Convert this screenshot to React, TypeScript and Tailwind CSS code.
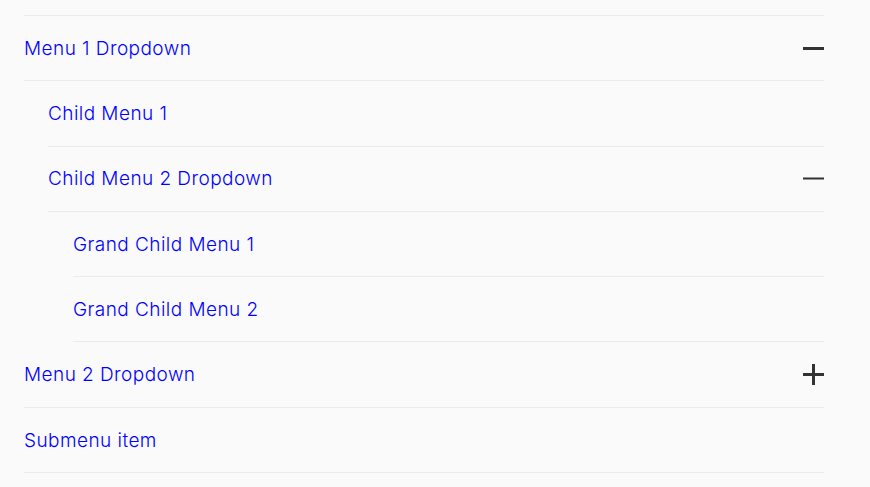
import React from 'react';

type Item = {
  label: string;
  open?: boolean;
  children?: Item[];
};

const menu: Item[] = [
  {
    label: 'Menu 1 Dropdown',
    open: true,
    children: [
      { label: 'Child Menu 1' },
      {
        label: 'Child Menu 2 Dropdown',
        open: true,
        children: [{ label: 'Grand Child Menu 1' }, { label: 'Grand Child Menu 2' }],
      },
    ],
  },
  { label: 'Menu 2 Dropdown', open: false, children: [] },
  { label: 'Submenu item' },
];

const Toggle = ({ open, thin }: { open: boolean; thin: boolean }) => (
  <svg width="21" height="21" viewBox="0 0 21 21" className="shrink-0">
    <rect x="0" y={thin ? 9.5 : 9} width="21" height={thin ? 2 : 3} fill="#333" />
    {!open && <rect x="9" y="0" width="3" height="21" fill="#333" />}
  </svg>
);

const Row = ({ item, depth }: { item: Item; depth: number }) => {
  const hasChildren = item.children !== undefined;
  const pad = depth === 0 ? '' : depth === 1 ? 'ml-6' : 'ml-[49px]';
  return (
    <>
      <div className={`${pad} flex h-[65.3px] items-center justify-between border-b border-[#ebebeb]`}>
        <a href="#" className="pt-0.5 text-[19px] font-light tracking-[0.45px] text-[#0000ff]">
          {item.label}
        </a>
        {hasChildren && <Toggle open={!!item.open} thin={depth > 0} />}
      </div>
      {item.open && item.children?.map((c) => <Row key={c.label} item={c} depth={depth + 1} />)}
    </>
  );
};

export default function App() {
  return (
    <div className="min-h-[487px] bg-[#fafafa] pt-[15px] font-['Inter',sans-serif]">
      <nav className="mx-6 w-[800px] border-t border-[#ebebeb]">
        {menu.map((m) => (
          <Row key={m.label} item={m} depth={0} />
        ))}
      </nav>
    </div>
  );
}
